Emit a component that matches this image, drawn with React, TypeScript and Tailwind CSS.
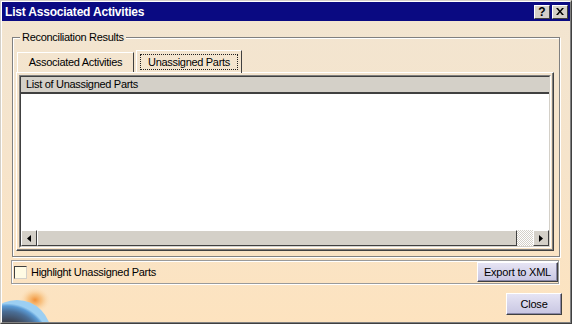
import React from 'react'

const font = { fontFamily: '"Liberation Sans", Arial, sans-serif' }

function WinButton({ children, className = '' }: { children: React.ReactNode; className?: string }) {
  return (
    <div
      className={`flex items-center justify-center border border-t-white border-l-white border-b-[#404040] border-r-[#404040] bg-gradient-to-b from-[#e6e4f4] to-[#c8c6e2] text-[11px] tracking-[-0.2px] text-black shadow-[inset_-1px_-1px_0_#8a88a8] ${className}`}
    >
      {children}
    </div>
  )
}

function Earth() {
  return (
    <svg width="70" height="50" viewBox="0 0 70 50" className="absolute bottom-0 left-0">
      <defs>
        <radialGradient id="glow" cx="0.5" cy="0.5" r="0.5">
          <stop offset="0" stopColor="#f08c30" stopOpacity="0.95" />
          <stop offset="0.45" stopColor="#f5b060" stopOpacity="0.6" />
          <stop offset="1" stopColor="#fde3bf" stopOpacity="0" />
        </radialGradient>
        <radialGradient id="globe" cx="0.35" cy="0.7" r="0.65">
          <stop offset="0" stopColor="#1e2028" />
          <stop offset="0.6" stopColor="#3c4250" />
          <stop offset="0.82" stopColor="#4a6e96" />
          <stop offset="0.94" stopColor="#5a9ad4" />
          <stop offset="1" stopColor="#9ccff2" />
        </radialGradient>
      </defs>
      <ellipse cx="33" cy="28" rx="16" ry="13" fill="url(#glow)" />
      <circle cx="15" cy="62" r="34" fill="url(#globe)" />
    </svg>
  )
}

export default function App() {
  return (
    <div className="h-[324px] w-[572px] overflow-hidden bg-[#d4d0c8]" style={font}>
      <div className="flex h-full w-full flex-col border border-t-[#d4d0c8] border-l-[#d4d0c8] border-b-[#404040] border-r-[#404040]">
        <div className="relative flex h-full flex-col border border-t-white border-l-white border-b-[#808080] border-r-[#808080] bg-gradient-to-b from-[#f2e5d1] via-[#f6e4cb] to-[#fde3bf]">
          {/* title bar */}
          <div className="flex h-[19px] items-center justify-between bg-[#0a0a82] pl-[3px] pr-[2px]">
            <span className="text-[12px] font-bold tracking-[-0.2px] text-white">List Associated Activities</span>
            <div className="flex gap-[2px]">
              <div className="flex h-[14px] w-[16px] items-center justify-center border border-t-white border-l-white border-b-[#404040] border-r-[#404040] bg-[#d4d0c8] text-[12px] font-bold leading-none">
                ?
              </div>
              <div className="flex h-[14px] w-[16px] items-center justify-center border border-t-white border-l-white border-b-[#404040] border-r-[#404040] bg-[#d4d0c8]">
                <svg width="8" height="7" viewBox="0 0 8 7">
                  <path d="M0 0h2l2 2.5L6 0h2L5 3.5 8 7H6L4 4.5 2 7H0l3-3.5z" fill="#000" />
                </svg>
              </div>
            </div>
          </div>

          {/* group box */}
          <div className="relative ml-[10px] mt-[16px] h-[220px] w-[548px] border border-[#808080] text-[11px] tracking-[-0.3px] shadow-[inset_1px_1px_0_#fff,1px_1px_0_#fff]">
            <span className="absolute -top-[8px] left-[7px] bg-[#f2e5d1] px-[2px] leading-[14px] text-black">
              Reconciliation Results
            </span>
            <div className="ml-[3px] mt-[12px] flex h-[22px] items-end pl-[1px]">
              <div className="flex h-[20px] w-[117px] items-center justify-center border border-b-0 border-t-white border-l-white border-r-[#404040]">
                Associated Activities
              </div>
              <div className="relative -mb-[1px] ml-[2px] flex h-[23px] w-[106px] items-center justify-center border border-b-0 border-t-white border-l-white border-r-[#404040]">
                <span className="border border-dotted border-[#202020] px-[7px] leading-[14px]">Unassigned Parts</span>
              </div>
            </div>
            <div className="ml-[3px] flex h-[179px] w-[538px] flex-col border border-t-white border-l-white border-b-[#404040] border-r-[#404040] p-[2px] shadow-[inset_-1px_-1px_0_#808080]">
              <div className="flex flex-1 flex-col border border-t-[#808080] border-l-[#808080] border-b-white border-r-white">
                <div className="flex flex-1 flex-col border border-t-[#404040] border-l-[#404040] border-b-[#d4d0c8] border-r-[#d4d0c8] bg-white">
                  <div className="flex h-[17px] items-center border-b-2 border-b-[#404040] bg-[#d4d0c8] pl-[5px]">
                    List of Unassigned Parts
                  </div>
                  <div className="flex-1" />
                  <div className="flex h-[16px]">
                    <div className="flex w-[16px] items-center justify-center border border-t-white border-l-white border-b-[#404040] border-r-[#404040] bg-[#d4d0c8]">
                      <svg width="4" height="7" viewBox="0 0 4 7">
                        <path d="M4 0v7L0 3.5z" fill="#000" />
                      </svg>
                    </div>
                    <div className="flex-1 border border-t-white border-l-white border-b-[#404040] border-r-[#404040] bg-[#d4d0c8]" />
                    <div className="w-[16px] bg-[repeating-conic-gradient(#d4d0c8_0%_25%,#ffffff_0%_50%)] bg-[length:2px_2px]" />
                    <div className="flex w-[16px] items-center justify-center border border-t-white border-l-white border-b-[#404040] border-r-[#404040] bg-[#d4d0c8]">
                      <svg width="4" height="7" viewBox="0 0 4 7">
                        <path d="M0 0v7L4 3.5z" fill="#000" />
                      </svg>
                    </div>
                  </div>
                </div>
              </div>
            </div>
          </div>

          {/* checkbox row */}
          <div className="ml-[9px] mt-[3px] flex h-[24px] w-[548px] items-center justify-between border border-[#9a9a9a] pl-[2px] shadow-[inset_1px_1px_0_#fff,1px_1px_0_#fff]">
            <div className="flex items-center gap-[4px]">
              <div className="h-[13px] w-[13px] border border-t-[#404040] border-l-[#404040] border-b-[#d4d0c8] border-r-[#d4d0c8] bg-[#fffbe4]" />
              <span className="text-[11px] tracking-[-0.3px]">Highlight Unassigned Parts</span>
            </div>
            <WinButton className="h-[20px] w-[81px]">Export to XML</WinButton>
          </div>

          {/* close */}
          <div className="mt-[9px] flex justify-end pr-[8px]">
            <WinButton className="h-[22px] w-[56px]">Close</WinButton>
          </div>

          <Earth />
        </div>
      </div>
    </div>
  )
}
